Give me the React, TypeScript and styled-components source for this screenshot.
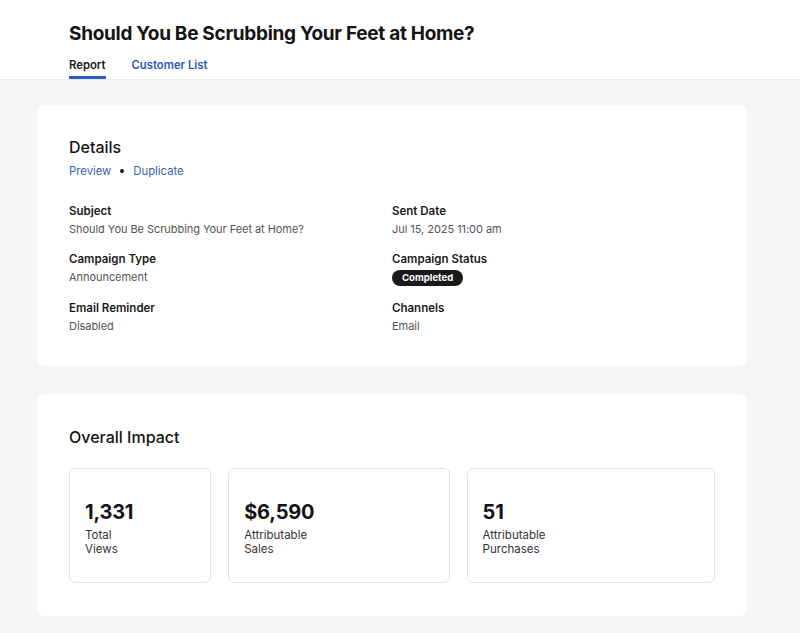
import styled, { createGlobalStyle } from "styled-components";

const GlobalStyle = createGlobalStyle`
  body {
    margin: 0;
    background: #f6f6f6;
    font-family: Inter, "Noto Sans", sans-serif;
    color: #141414;
  }
`;

const Page = styled.div`
  min-height: 633px;
  background: #f6f6f6;
`;

const Header = styled.header`
  background: #fff;
  padding: 21px 69px 0;
  border-bottom: 1px solid #ececec;
`;

const Title = styled.h1`
  margin: 0;
  font-size: 19px;
  line-height: 26px;
  font-weight: 700;
  letter-spacing: -0.3px;
`;

const Tabs = styled.nav`
  display: flex;
  gap: 26px;
  margin-top: 7px;
`;

const Tab = styled.a<{ $active?: boolean }>`
  font-size: 11.3px;
  font-weight: 600;
  line-height: 16px;
  padding: 3px 0 3px;
  color: ${(p) => (p.$active ? "#1a1a1a" : "#2b58b8")};
  border-bottom: 3px solid ${(p) => (p.$active ? "#2b5cc7" : "transparent")};
  text-decoration: none;
`;

const Main = styled.main`
  display: flex;
  flex-direction: column;
  gap: 28px;
  padding: 25px 53px 20px 37px;
`;

const Card = styled.section`
  background: #fff;
  border-radius: 8px;
  padding: 32px 32px;
`;

const CardTitle = styled.h2`
  margin: 0;
  font-size: 16px;
  line-height: 20px;
  font-weight: 500;
`;

const Links = styled.div`
  display: flex;
  align-items: center;
  gap: 9px;
  margin-top: 6px;
  font-size: 11.3px;
  line-height: 16px;
`;

const LinkText = styled.a`
  color: #3a5fae;
  text-decoration: none;
`;

const Dot = styled.span`
  width: 4px;
  height: 4px;
  border-radius: 50%;
  background: #1a1a1a;
`;

const DetailGrid = styled.div`
  display: grid;
  grid-template-columns: 1fr 1fr;
  row-gap: 14px;
  margin-top: 24px;
`;

const Field = styled.div`
  display: flex;
  flex-direction: column;
  gap: 2px;
`;

const Label = styled.div`
  font-size: 11.5px;
  font-weight: 600;
  line-height: 16px;
  color: #1a1a1a;
`;

const Value = styled.div`
  font-size: 11px;
  line-height: 16px;
  letter-spacing: -0.05px;
  color: #555;
`;

const Badge = styled.span`
  align-self: flex-start;
  background: #1a1a1a;
  color: #fff;
  font-size: 9.6px;
  font-weight: 700;
  line-height: 16px;
  padding: 0 10px;
  border-radius: 9px;
  margin-top: 1px;
`;

const ImpactCard = styled(Card)`
  padding: 33px 32px 33px;
`;

const Stats = styled.div`
  display: grid;
  grid-template-columns: 142fr 221fr 248fr;
  gap: 17px;
  margin-top: 21px;
`;

const Stat = styled.div`
  border: 1px solid #e3e3e3;
  border-radius: 6px;
  height: 115px;
  box-sizing: border-box;
  padding: 5px 15px 0;
  display: flex;
  flex-direction: column;
  justify-content: center;
`;

const StatNumber = styled.div`
  font-size: 20px;
  font-weight: 700;
  line-height: 24px;
  letter-spacing: -0.2px;
`;

const StatLabel = styled.div`
  font-size: 11.5px;
  line-height: 14px;
  color: #333;
  margin-top: 4px;
  white-space: pre-line;
`;

const details = [
  { label: "Subject", value: "Should You Be Scrubbing Your Feet at Home?" },
  { label: "Sent Date", value: "Jul 15, 2025 11:00 am" },
  { label: "Campaign Type", value: "Announcement" },
  { label: "Campaign Status", badge: "Completed" },
  { label: "Email Reminder", value: "Disabled" },
  { label: "Channels", value: "Email" },
];

const stats = [
  { number: "1,331", label: "Total\nViews" },
  { number: "$6,590", label: "Attributable\nSales" },
  { number: "51", label: "Attributable\nPurchases" },
];

export default function App() {
  return (
    <Page>
      <GlobalStyle />
      <Header>
        <Title>Should You Be Scrubbing Your Feet at Home?</Title>
        <Tabs>
          <Tab $active>Report</Tab>
          <Tab>Customer List</Tab>
        </Tabs>
      </Header>
      <Main>
        <Card>
          <CardTitle>Details</CardTitle>
          <Links>
            <LinkText>Preview</LinkText>
            <Dot />
            <LinkText>Duplicate</LinkText>
          </Links>
          <DetailGrid>
            {details.map((d) => (
              <Field key={d.label}>
                <Label>{d.label}</Label>
                {d.badge ? <Badge>{d.badge}</Badge> : <Value>{d.value}</Value>}
              </Field>
            ))}
          </DetailGrid>
        </Card>
        <ImpactCard>
          <CardTitle>Overall Impact</CardTitle>
          <Stats>
            {stats.map((s) => (
              <Stat key={s.number}>
                <StatNumber>{s.number}</StatNumber>
                <StatLabel>{s.label}</StatLabel>
              </Stat>
            ))}
          </Stats>
        </ImpactCard>
      </Main>
    </Page>
  );
}
